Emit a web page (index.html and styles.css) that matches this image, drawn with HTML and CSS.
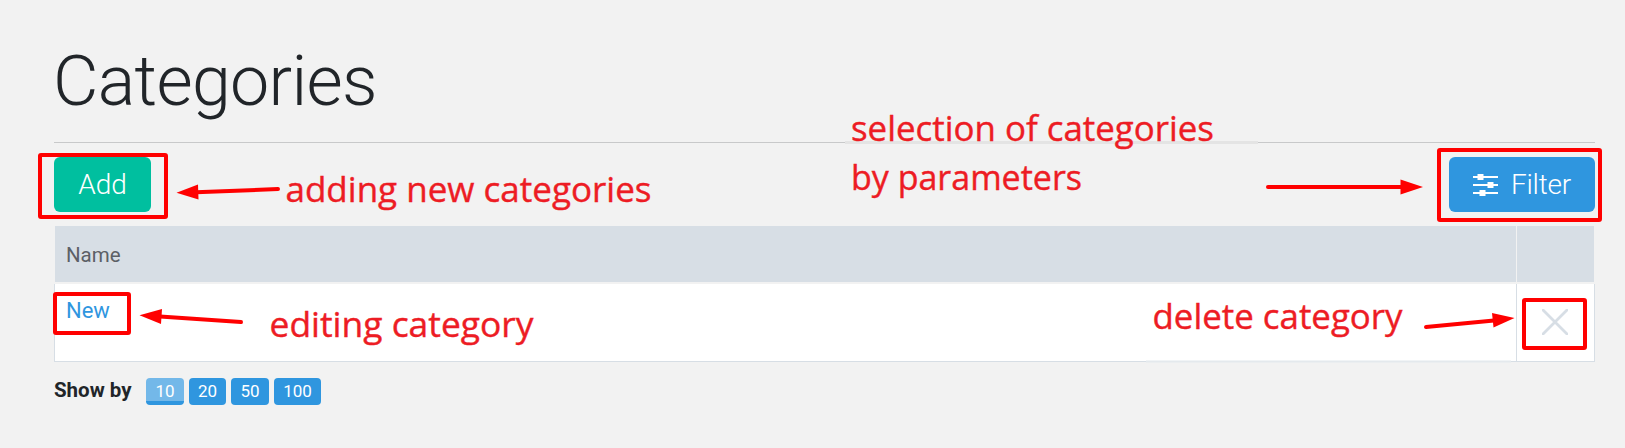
FILE: index.html
```html
<!DOCTYPE html>
<html lang="en">
<head>
<meta charset="utf-8">
<title>Categories</title>
<link rel="stylesheet" href="styles.css">
</head>
<body>
<main class="page">
  <h1 class="title">Categories</h1>
  <div class="toolbar">
    <button class="btn btn-add">Add</button>
    <button class="btn btn-filter">
      <svg class="filter-icon" viewBox="0 0 25 22" width="25" height="22" fill="#fff">
        <path d="M0 2h25v2H0zM0 10h25v2H0zM0 18h25v2H0z"/>
        <path d="M4.500 0h6v6h-6zM14.500 8h6v6h-6zM6.500 16h6v6h-6z"/>
      </svg>
      <span>Filter</span>
    </button>
  </div>
  <section class="table">
    <div class="row head">
      <div class="cell">Name</div>
      <div class="cell action"></div>
    </div>
    <div class="row body">
      <div class="cell"><a class="link">New</a></div>
      <div class="cell action">
        <svg viewBox="0 0 26 26" width="26" height="26"><path d="M1 1 25 25M25 1 1 25" stroke="#d7dee5" stroke-width="2.800" stroke-linecap="round"/></svg>
      </div>
    </div>
  </section>
  <footer class="pager">
    <strong class="pager-label">Show by</strong>
    <a class="size active">10</a>
    <a class="size">20</a>
    <a class="size size-mid">50</a>
    <a class="size size-wide">100</a>
  </footer>
</main>
<svg class="notes" viewBox="0 0 1625 448" width="1625" height="448">
  <path d="M845 141h413v3H845z" fill="#e4e4e4"/>
  <path d="M1146 360.500h365v2h-365z" fill="#e4e9ed"/>
  <g class="frames">
    <rect x="40" y="155" width="126" height="62" rx="1"/>
    <rect x="1439" y="150" width="161" height="70" rx="1"/>
    <rect x="55" y="294" width="74" height="39" rx="1"/>
    <rect x="1524" y="300" width="61" height="48" rx="1"/>
  </g>
  <g class="arrows">
    <path d="M278 189 196 192.300"/>
    <path d="M241 322 160 316.500"/>
    <path d="M1268 187H1402"/>
    <path d="M1426 327 1494 320.500"/>
  </g>
  <g fill="#f00">
    <path d="M176.500 192.800 198 184.500 198.500 199.500z"/>
    <path d="M139.500 315.300 162 309 161 324z"/>
    <path d="M1423 187 1400.500 179.500V194.500z"/>
    <path d="M1514.500 318 1492 313 1493.500 327.500z"/>
  </g>
  <g class="labels">
    <text x="285.500" y="202.400" textLength="366" lengthAdjust="spacingAndGlyphs">adding new categories</text>
    <text x="269.500" y="337.400" textLength="264" lengthAdjust="spacingAndGlyphs">editing category</text>
    <text x="851" y="141" textLength="363" lengthAdjust="spacingAndGlyphs">selection of categories</text>
    <text x="851" y="190" textLength="231" lengthAdjust="spacingAndGlyphs">by parameters</text>
    <text x="1152.500" y="329" textLength="250" lengthAdjust="spacingAndGlyphs">delete category</text>
  </g>
</svg>
</body>
</html>
```
FILE: styles.css
```css
* { box-sizing: border-box; }
body {
  margin: 0;
  position: relative;
  height: 448px;
  overflow: hidden;
  background: #f2f2f2;
  color: #212529;
  font-family: Roboto, "Liberation Sans", sans-serif;
}
.page { padding: 39px 30px 0 54px; }
.title {
  height: 104px;
  margin: 0;
  border-bottom: 1px solid #c8c9ca;
  font-size: 70px;
  font-weight: 300;
  letter-spacing: -0.7px;
  text-indent: -1px;
  line-height: 84px;
}
.toolbar {
  display: flex;
  justify-content: space-between;
  padding: 14px 0;
}
.btn {
  display: flex;
  align-items: center;
  justify-content: center;
  height: 55px;
  padding: 0;
  border: 0;
  border-radius: 6px;
  color: #fff;
  font: 300 28px/55px Roboto, sans-serif;
}
.btn-add { width: 97px; background: #00bf9f; }
.btn-filter { width: 146px; gap: 13px; background: #2f96df; }
.btn-filter span { letter-spacing: -0.2px; }
.row { display: grid; grid-template-columns: 1fr 78px; }
.cell { padding: 0 12px 0 11px; }
.head {
  grid-template-columns: 1fr 77px;
  gap: 1px;
  height: 56px;
  margin: 0 1px;
  color: #5c6066;
  font-size: 20.500px;
  line-height: 54px;
}
.head .cell { padding-top: 2px; background: #d7dee5; }
.body {
  height: 78px;
  margin-top: 2px;
  background: #fff;
  border: 1px solid #d7dee5;
  border-top: 0;
}
.body .cell { line-height: 54px; }
.body .action {
  display: grid;
  place-items: center;
  padding: 0 2px 1px 0;
  border-left: 1px solid #d7dee5;
}
.link { color: #2f96df; font-size: 22px; }
.pager {
  display: flex;
  align-items: center;
  gap: 5px;
  height: 27px;
  margin-top: 16px;
}
.pager-label {
  width: 87px;
  font-size: 20.500px;
  font-weight: 700;
  line-height: 24px;
  margin-top: -4px;
  white-space: nowrap;
}
.size {
  width: 37px;
  height: 27px;
  border-radius: 4px;
  background: #2f96df;
  color: #fff;
  font-size: 17px;
  line-height: 27px;
  text-align: center;
}
.active {
  width: 38px;
  background: #73b8e9;
  border-bottom: 4px solid #2f96df;
}
.size-mid { width: 38px; }
.size-wide { width: 47px; }
.notes {
  position: absolute;
  inset: 0;
  pointer-events: none;
}
.frames { fill: none; stroke: #f00; stroke-width: 4; }
.arrows { fill: none; stroke: #f00; stroke-width: 4; stroke-linecap: round; }
.labels {
  fill: #ed1c24;
  stroke: #ed1c24;
  stroke-width: 0.4;
  font-family: "Open Sans", "Noto Sans", sans-serif;
  font-size: 35.500px;
}
```
